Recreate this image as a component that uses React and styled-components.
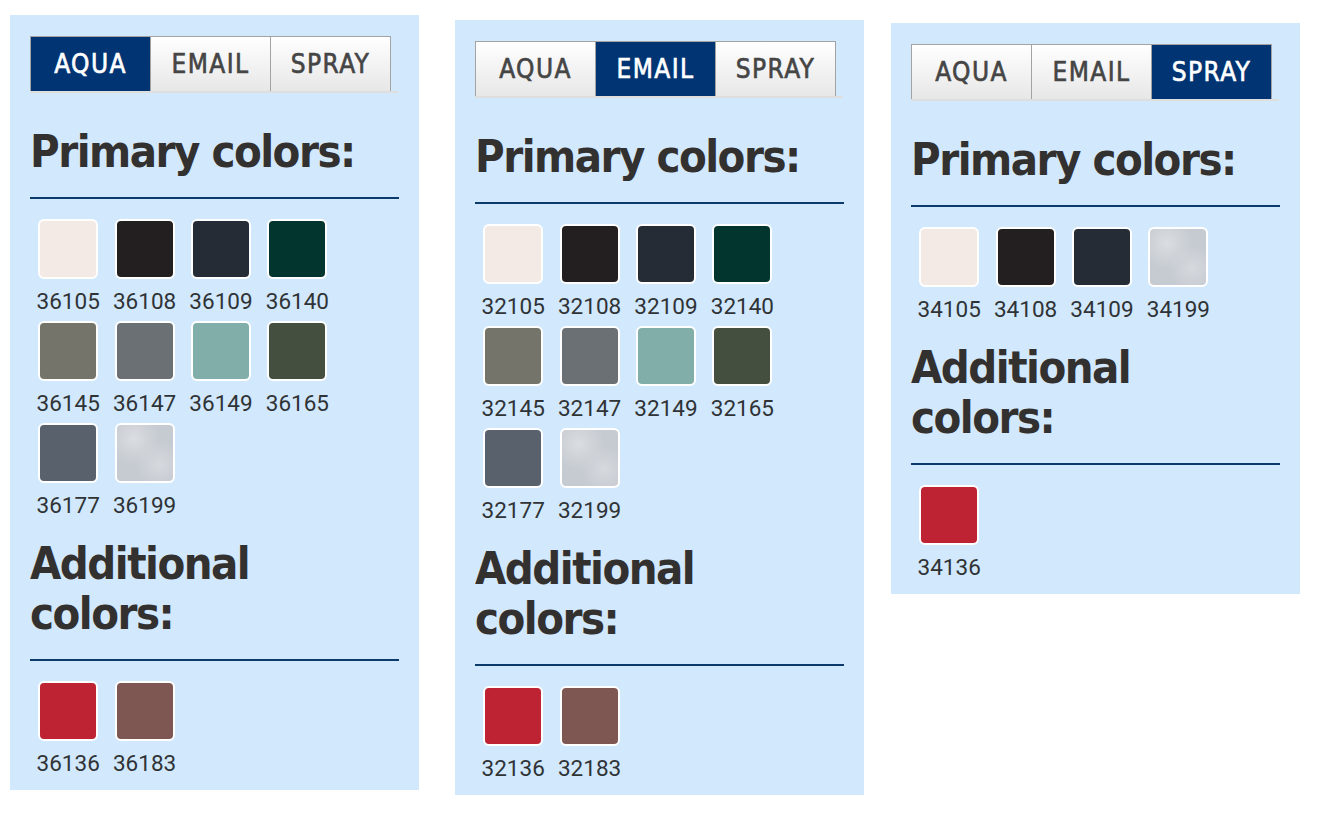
import React from "react";
import styled, { createGlobalStyle } from "styled-components";

const GlobalStyle = createGlobalStyle`
  body {
    margin: 0;
    background: #ffffff;
    font-family: "DejaVu Sans Condensed", "DejaVu Sans", sans-serif;
  }
`;

const SILVER =
  "radial-gradient(circle at 30% 25%, #dadde1 0, transparent 45%), radial-gradient(circle at 75% 70%, #d6d9de 0, transparent 40%), #c6cbd1";

const aqua = {
  primary: [
    ["36105", "#f3e9e5"],
    ["36108", "#231f20"],
    ["36109", "#262c35"],
    ["36140", "#02352e"],
    ["36145", "#74746a"],
    ["36147", "#6b7074"],
    ["36149", "#81aea9"],
    ["36165", "#444f40"],
    ["36177", "#59626c"],
    ["36199", SILVER],
  ],
  additional: [
    ["36136", "#be2334"],
    ["36183", "#7f5752"],
  ],
};

const email = {
  primary: aqua.primary.map(([code, c]) => ["32" + code.slice(2), c]),
  additional: aqua.additional.map(([code, c]) => ["32" + code.slice(2), c]),
};

const spray = {
  primary: [
    ["34105", "#f3e9e5"],
    ["34108", "#231f20"],
    ["34109", "#262c35"],
    ["34199", SILVER],
  ],
  additional: [["34136", "#be2334"]],
};

const TABS = ["AQUA", "EMAIL", "SPRAY"];

const Page = styled.div`
  display: flex;
  align-items: flex-start;
  padding-left: 10px;
`;

const Panel = styled.section`
  width: 409px;
  box-sizing: border-box;
  margin-top: ${(p) => p.$top}px;
  margin-left: ${(p) => p.$left}px;
  padding: 21px 20px 14px 20px;
  background: #d2e8fc;
`;

const TabList = styled.div`
  display: flex;
  width: 368px;
  border-bottom: 2px solid #dedede;
`;

const Tab = styled.div`
  width: 121px;
  height: 55px;
  box-sizing: border-box;
  display: flex;
  align-items: center;
  justify-content: center;
  border: 1px solid #a3a3a3;
  border-bottom: none;
  margin-right: -1px;
  font-size: 26px;
  letter-spacing: 1.4px;
  -webkit-text-stroke: 0.6px currentColor;
  color: ${(p) => (p.$active ? "#ffffff" : "#454545")};
  background: ${(p) =>
    p.$active ? "#003473" : "linear-gradient(#ffffff, #e7e7e7)"};
`;

const Heading = styled.h2`
  margin: ${(p) => p.$top}px 0 20px 0;
  font-size: 45px;
  line-height: 50px;
  font-weight: bold;
  letter-spacing: -1.5px;
  color: #333030;
`;

const Rule = styled.hr`
  margin: 0;
  border: none;
  height: 2px;
  width: 369px;
  background: #0b3a6b;
`;

const Grid = styled.div`
  display: flex;
  flex-wrap: wrap;
  row-gap: 7px;
  margin-top: 20px;
`;

const Item = styled.div`
  width: 76.4px;
  display: flex;
  flex-direction: column;
  align-items: center;
`;

const Swatch = styled.div`
  width: 56px;
  height: 56px;
  border: 2px solid #ffffff;
  border-radius: 6px;
  background: ${(p) => p.$color};
`;

const Code = styled.div`
  margin-top: 9px;
  font-family: Roboto, "Noto Sans", sans-serif;
  font-size: 22.5px;
  line-height: 26px;
  color: #2f3336;
`;

const Swatches = ({ items }) => (
  <Grid>
    {items.map(([code, color]) => (
      <Item key={code}>
        <Swatch $color={color} />
        <Code>{code}</Code>
      </Item>
    ))}
  </Grid>
);

const ColorPanel = ({ active, data, top, left }) => (
  <Panel $top={top} $left={left}>
    <TabList>
      {TABS.map((t) => (
        <Tab key={t} $active={t === active}>
          {t}
        </Tab>
      ))}
    </TabList>
    <Heading $top={34}>Primary colors:</Heading>
    <Rule />
    <Swatches items={data.primary} />
    <Heading $top={21}>
      Additional
      <br />
      colors:
    </Heading>
    <Rule />
    <Swatches items={data.additional} />
  </Panel>
);

export default function App() {
  return (
    <>
      <GlobalStyle />
      <Page>
        <ColorPanel active="AQUA" data={aqua} top={15} left={0} />
        <ColorPanel active="EMAIL" data={email} top={20} left={36} />
        <ColorPanel active="SPRAY" data={spray} top={23} left={27} />
      </Page>
    </>
  );
}
